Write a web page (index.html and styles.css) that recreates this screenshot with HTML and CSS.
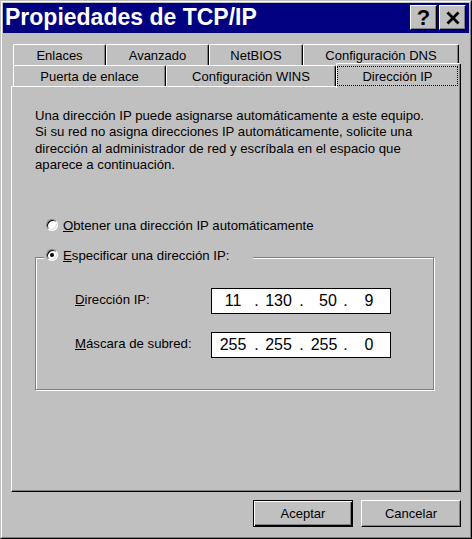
FILE: index.html
```html
<!DOCTYPE html>
<html lang="es">
<head>
<meta charset="utf-8">
<title>Propiedades de TCP/IP</title>
<link rel="stylesheet" href="styles.css">
</head>
<body>
<div class="window">
  <div class="window-inner">
    <div class="titlebar">
      <span class="title">Propiedades de TCP/IP</span>
      <div class="tb-buttons">
        <div class="tb-btn tb-q">?</div>
        <div class="tb-btn tb-x">
          <svg width="14" height="14" viewBox="0 0 14 14"><path d="M1.5 1.5 L12.5 12.5 M12.5 1.5 L1.5 12.5" stroke="#000" stroke-width="2.8" fill="none"/></svg>
        </div>
      </div>
    </div>

    <div class="tabctl">
      <div class="tab-row">
        <div class="tab t-enlaces">Enlaces</div>
        <div class="tab t-avanzado">Avanzado</div>
        <div class="tab t-netbios">NetBIOS</div>
        <div class="tab t-dns">Configuración DNS</div>
      </div>
      <div class="tab-row">
        <div class="tab t-puerta">Puerta de enlace</div>
        <div class="tab t-wins">Configuración WINS</div>
        <div class="tab t-ip sel"><div class="focus">Dirección IP</div></div>
      </div>
      <div class="panel">
        <p class="desc">Una dirección IP puede asignarse automáticamente a este equipo.<br>Si su red no asigna direcciones IP automáticamente, solicite una<br>dirección al administrador de red y escríbala en el espacio que<br>aparece a continuación.</p>
        <div class="radio"><span class="rb"></span><span><u>O</u>btener una dirección IP automáticamente</span></div>
        <div class="group">
          <div class="legend"><span class="rb on"></span><span><u>E</u>specificar una dirección IP:</span></div>
          <div class="frow frow1">
            <span class="flabel"><u>D</u>irección IP:</span>
            <div class="ipbox"><span>11</span><span>.</span><span>130</span><span>.</span><span class="o3">50</span><span>.</span><span>9</span></div>
          </div>
          <div class="frow frow2">
            <span class="flabel"><u>M</u>áscara de subred:</span>
            <div class="ipbox"><span>255</span><span>.</span><span>255</span><span>.</span><span>255</span><span>.</span><span>0</span></div>
          </div>
        </div>
      </div>
    </div>

    <div class="btns">
      <div class="btn default">Aceptar</div>
      <div class="btn">Cancelar</div>
    </div>
  </div>
</div>
</body>
</html>
```
FILE: styles.css
```css
* { box-sizing: border-box; }
html, body { margin: 0; padding: 0; }
body {
  width: 472px;
  height: 539px;
  overflow: hidden;
  background: #c0c0c0;
  font-family: "Liberation Sans", Arial, sans-serif;
  font-size: 13px;
  color: #000;
}
.window {
  width: 472px;
  height: 539px;
  border: 1px solid;
  border-color: #c0c0c0 #000 #000 #c0c0c0;
  background: #c0c0c0;
}
.window-inner {
  height: 100%;
  border: 1px solid;
  border-color: #fff #808080 #808080 #fff;
  padding: 1px;
  display: flex;
  flex-direction: column;
}
.titlebar {
  height: 30px;
  flex: none;
  background: #000080;
  display: flex;
  justify-content: space-between;
  align-items: flex-start;
}
.title {
  color: #fff;
  font-weight: bold;
  font-size: 23px;
  line-height: 29px;
  padding-left: 2px;
  white-space: nowrap;
}
.tb-buttons {
  display: flex;
  gap: 2px;
  margin: 2px 3px 0 0;
}
.tb-btn {
  width: 27px;
  height: 25px;
  border: 1px solid;
  border-color: #fff #000 #000 #fff;
  box-shadow: inset -1px -1px #808080;
  background: #c0c0c0;
  display: flex;
  align-items: center;
  justify-content: center;
}
.tb-q {
  font-weight: bold;
  font-size: 22px;
  line-height: 1;
}
.tb-x svg { display: block; }

.tabctl { margin: 11px 8px 0 8px; }
.tab-row {
  display: flex;
  height: 21px;
  padding-left: 2px;
  align-items: flex-start;
}
.tab {
  height: 21px;
  flex: none;
  border-top: 1px solid #fff;
  border-left: 1px solid #fff;
  border-right: 1px solid #000;
  border-radius: 2px 2px 0 0;
  box-shadow: inset -1px 0 #808080;
  display: flex;
  align-items: center;
  justify-content: center;
  white-space: nowrap;
  background: #c0c0c0;
}
.t-enlaces { width: 93px; }
.t-avanzado { width: 103px; }
.t-netbios { width: 94px; }
.t-dns { width: 156px; }
.t-puerta { width: 153px; }
.t-wins { width: 170px; }
.t-ip { width: 125px; }
.tab.sel {
  height: 25px;
  margin-top: -2px;
  position: relative;
  z-index: 1;
  align-items: flex-start;
  justify-content: flex-start;
}
.focus {
  margin-top: 2px;
  width: 121px;
  height: 20px;
  border: 1px dotted #000;
  display: flex;
  align-items: center;
  justify-content: center;
}

.panel {
  height: 406px;
  border: 1px solid;
  border-color: #fff #000 #000 #fff;
  box-shadow: inset -1px -1px #808080;
  padding: 21px 0 0 23px;
  font-size: 13.2px;
}
.desc {
  margin: 0;
  line-height: 16.3px;
  white-space: nowrap;
}
.radio {
  display: flex;
  align-items: center;
  gap: 5px;
  height: 16px;
  margin: 44px 0 0 11px;
  white-space: nowrap;
}
.rb {
  flex: none;
  position: relative;
  width: 12px;
  height: 12px;
  border-radius: 50%;
  border: 1px solid;
  border-color: #808080 #fff #fff #808080;
  background: #fff;
  box-shadow: inset 1px 1px #000, inset -1px -1px #dfdfdf;
}
.rb.on::after {
  content: "";
  position: absolute;
  left: 3px;
  top: 3px;
  width: 4px;
  height: 4px;
  border-radius: 50%;
  background: #000;
}
.group {
  margin-top: 24px;
  width: 399px;
  height: 133px;
  border: 1px solid #808080;
  box-shadow: inset 1px 1px #fff, 1px 1px #fff;
}
.legend {
  display: flex;
  align-items: center;
  gap: 5px;
  height: 16px;
  width: 209px;
  margin: -11px 0 0 8px;
  padding-left: 2px;
  background: #c0c0c0;
  white-space: nowrap;
}
.frow {
  display: flex;
  align-items: center;
  padding-left: 39px;
}
.frow1 { margin-top: 25px; }
.frow2 { margin-top: 18px; }
.flabel {
  width: 136px;
  margin-top: -4px;
  white-space: nowrap;
}
.ipbox {
  width: 180px;
  height: 26px;
  border: 1px solid #000;
  background: #fff;
  display: grid;
  grid-template-columns: 42px 5px 39px 7px 38px 5px 42px;
  align-items: center;
  text-align: center;
  font-size: 16px;
  line-height: 24px;
}
.o3 { padding-left: 8px; }

.btns {
  display: flex;
  justify-content: flex-end;
  gap: 8px;
  margin: 8px 8px 0 0;
}
.btn {
  width: 100px;
  height: 27px;
  border: 1px solid;
  border-color: #fff #000 #000 #fff;
  box-shadow: inset -1px -1px #808080;
  display: flex;
  align-items: center;
  justify-content: center;
}
.btn.default {
  border-color: #000;
  box-shadow: inset 1px 1px #fff, inset -1px -1px #000, inset -2px -2px #808080;
}
```
